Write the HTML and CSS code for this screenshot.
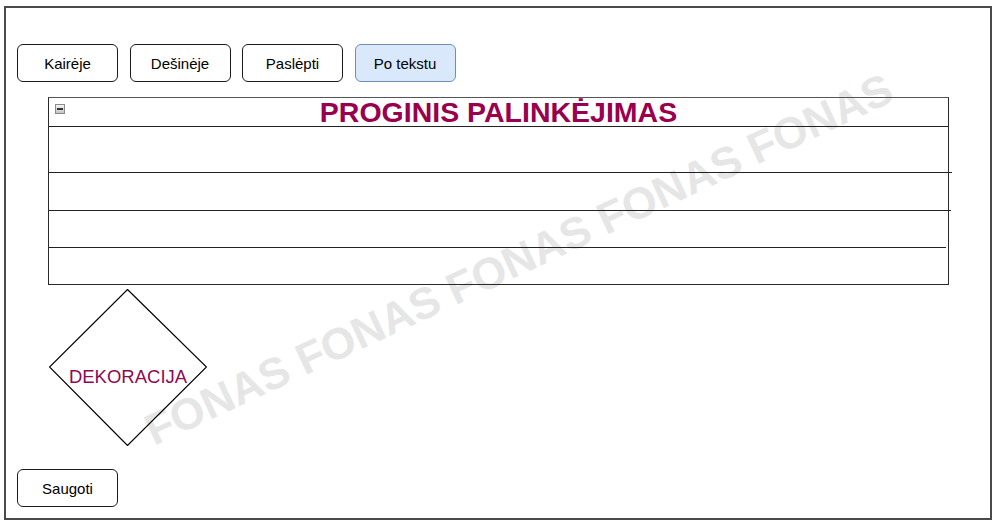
FILE: index.html
```html
<!DOCTYPE html>
<html lang="lt">
<head>
<meta charset="utf-8">
<title>Proginis palinkėjimas</title>
<link rel="stylesheet" href="styles.css">
</head>
<body>
<div class="frame">
  <div class="watermark">FONAS FONAS FONAS FONAS FONAS</div>
  <div class="toolbar">
    <button class="btn">Kairėje</button>
    <button class="btn">Dešinėje</button>
    <button class="btn">Paslėpti</button>
    <button class="btn btn-active">Po tekstu</button>
  </div>
  <div class="card">
    <div class="card-head">
      <span class="collapse"><span class="collapse-bar"></span></span>
      <h1 class="card-title">PROGINIS PALINKĖJIMAS</h1>
    </div>
    <div class="row row-1"></div>
    <div class="row row-2"></div>
    <div class="row row-3"></div>
    <div class="row row-4"></div>
  </div>
  <div class="deco">
    <svg class="deco-shape" width="158" height="157" viewBox="0 0 158 157">
      <polygon points="78.5,0.5 157.5,78 78.5,156.5 0.5,78" fill="none" stroke="#000" stroke-width="1.2"/>
    </svg>
    <span class="deco-text">DEKORACIJA</span>
  </div>
  <div class="footer">
    <button class="btn">Saugoti</button>
  </div>
</div>
</body>
</html>
```
FILE: styles.css
```css
* { box-sizing: border-box; }
html, body { background: #fff; }
body {
  margin: 0;
  font-family: "Liberation Sans", Arial, sans-serif;
  color: #000;
}
.frame {
  position: relative;
  z-index: 0;
  margin: 6px 0 0 4px;
  width: 988px;
  height: 514px;
  border: 2px solid #4a4a4a;
  padding: 36px 0 0 11px;
}
.watermark {
  position: absolute;
  z-index: -1;
  left: 148px;
  top: 401px;
  font-size: 44px;
  line-height: 44px;
  font-weight: bold;
  color: #e6e6e6;
  white-space: nowrap;
  transform-origin: 0 37px;
  transform: rotate(-25deg);
}
.toolbar {
  display: flex;
  gap: 11.5px;
}
.btn {
  width: 101px;
  height: 38px;
  margin: 0;
  padding: 0;
  border: 1px solid #1a1a1a;
  border-radius: 6px;
  background: #fff;
  font-family: "Liberation Sans", Arial, sans-serif;
  font-size: 15px;
  color: #000;
}
.btn-active {
  background: #dae8fc;
  border-color: #6c8ebf;
}
.card {
  margin: 15px 0 0 31px;
  width: 901px;
  border: 1px solid #2a2a2a;
  border-top-color: #555;
}
.card-head {
  position: relative;
  height: 29px;
  border-bottom: 1px solid #222;
}
.collapse {
  position: absolute;
  left: 6px;
  top: 6px;
  width: 10px;
  height: 10px;
  border: 1px solid #8a8a8a;
  background: linear-gradient(#f4f4f4, #c4c4c4);
  display: flex;
  align-items: center;
  justify-content: center;
}
.collapse-bar {
  width: 6px;
  height: 2px;
  background: #333;
}
.card-title {
  margin: 0;
  text-align: center;
  font-size: 28.5px;
  line-height: 28px;
  font-weight: bold;
  color: #99004d;
}
.row { border-bottom: 1px solid #222; }
.row-1 { height: 46px; margin-right: -4px; }
.row-2 { height: 38px; margin-right: -3px; }
.row-3 { height: 37px; margin-right: 2px; }
.row-4 { height: 36px; border-bottom: none; }
.deco {
  display: grid;
  width: 158px;
  height: 157px;
  margin: 4px 0 0 32px;
}
.deco-shape, .deco-text { grid-area: 1 / 1; }
.deco-text {
  justify-self: center;
  align-self: start;
  margin-top: 78px;
  font-size: 18.5px;
  line-height: 20px;
  color: #8f0a52;
}
.footer {
  margin-top: 23px;
}
```
